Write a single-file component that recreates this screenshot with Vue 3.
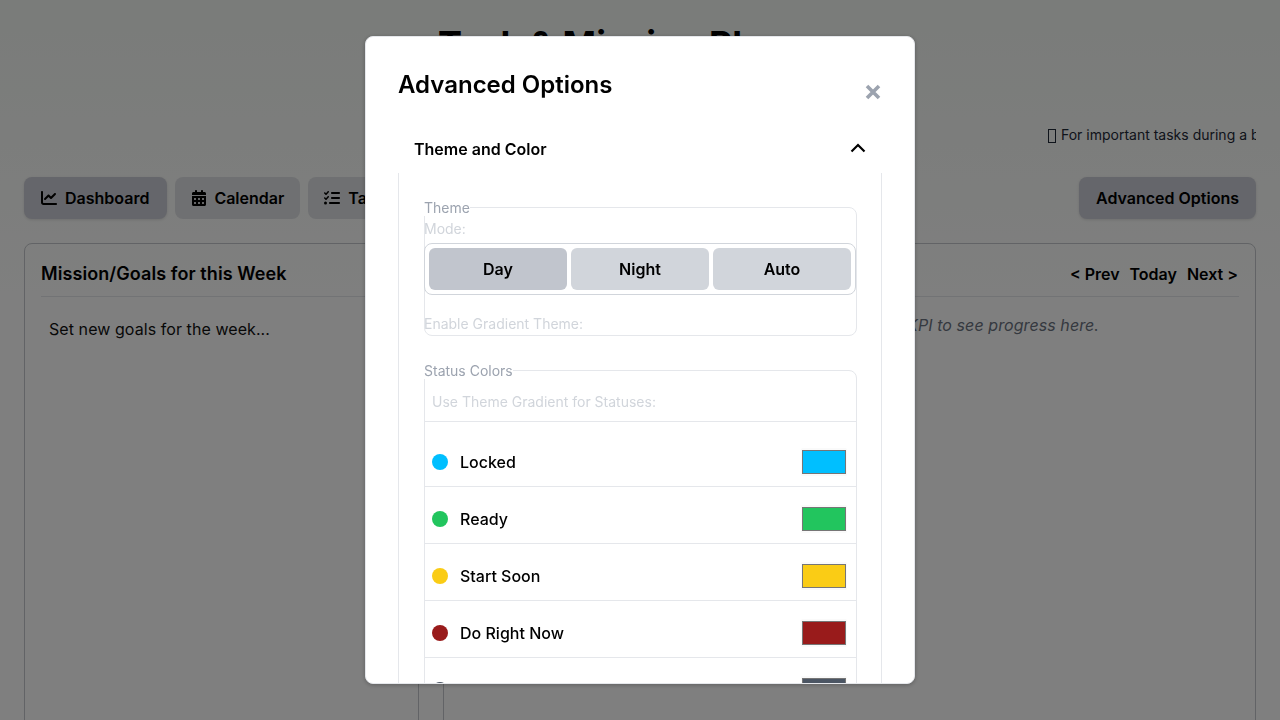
<script setup>
const tabs = [
  { label: 'Dashboard', active: true, w: 16, view: '0 0 512 512', d: 'M64 64c0-17.7-14.3-32-32-32S0 46.3 0 64V400c0 44.2 35.8 80 80 80H480c17.7 0 32-14.3 32-32s-14.3-32-32-32H80c-8.8 0-16-7.2-16-16V64zm406.6 86.6c12.5-12.5 12.5-32.8 0-45.3s-32.8-12.5-45.3 0L320 210.7l-57.4-57.4c-12.5-12.5-32.8-12.5-45.3 0l-112 112c-12.5 12.5-12.5 32.8 0 45.3s32.8 12.5 45.3 0L240 221.3l57.4 57.4c12.5 12.5 32.8 12.5 45.3 0l128-128z' },
  { label: 'Calendar', active: false, w: 14, view: '0 0 448 512', d: 'M128 0c17.7 0 32 14.3 32 32V64H288V32c0-17.7 14.3-32 32-32s32 14.3 32 32V64h48c26.5 0 48 21.5 48 48v48H0V112C0 85.5 21.5 64 48 64H96V32c0-17.7 14.3-32 32-32zM0 192H448V464c0 26.5-21.5 48-48 48H48c-26.5 0-48-21.5-48-48V192zm64 80v32c0 8.8 7.2 16 16 16h32c8.8 0 16-7.2 16-16V272c0-8.8-7.2-16-16-16H80c-8.8 0-16 7.2-16 16zm128 0v32c0 8.8 7.2 16 16 16h32c8.8 0 16-7.2 16-16V272c0-8.8-7.2-16-16-16H208c-8.8 0-16 7.2-16 16zm144-16c-8.8 0-16 7.2-16 16v32c0 8.8 7.2 16 16 16h32c8.8 0 16-7.2 16-16V272c0-8.8-7.2-16-16-16H336zM64 400v32c0 8.8 7.2 16 16 16h32c8.8 0 16-7.2 16-16V400c0-8.8-7.2-16-16-16H80c-8.8 0-16 7.2-16 16zm144-16c-8.8 0-16 7.2-16 16v32c0 8.8 7.2 16 16 16h32c8.8 0 16-7.2 16-16V400c0-8.8-7.2-16-16-16H208zm112 16v32c0 8.8 7.2 16 16 16h32c8.8 0 16-7.2 16-16V400c0-8.8-7.2-16-16-16H336c-8.8 0-16 7.2-16 16z' },
  { label: 'Tasks', active: false, w: 16, view: '0 0 512 512', d: 'M152.1 38.2c9.9 8.9 10.7 24 1.8 33.9l-72 80c-4.4 4.9-10.6 7.8-17.2 7.9s-12.9-2.4-17.6-7L7 113C-2.3 103.6-2.3 88.4 7 79s24.6-9.4 33.9 0l22.1 22.1 55.1-61.2c8.9-9.9 24-10.7 33.9-1.8zm0 160c9.9 8.9 10.7 24 1.8 33.9l-72 80c-4.4 4.9-10.6 7.8-17.2 7.9s-12.9-2.4-17.6-7L7 273c-9.4-9.4-9.4-24.6 0-33.9s24.6-9.4 33.9 0l22.1 22.1 55.1-61.2c8.9-9.9 24-10.7 33.9-1.8zM224 96c0-17.7 14.3-32 32-32H480c17.7 0 32 14.3 32 32s-14.3 32-32 32H256c-17.7 0-32-14.3-32-32zm0 160c0-17.7 14.3-32 32-32H480c17.7 0 32 14.3 32 32s-14.3 32-32 32H256c-17.7 0-32-14.3-32-32zM160 416c0-17.7 14.3-32 32-32H480c17.7 0 32 14.3 32 32s-14.3 32-32 32H192c-17.7 0-32-14.3-32-32zM48 368a48 48 0 1 1 0 96 48 48 0 1 1 0-96z' },
]
const statuses = [
  { name: 'Locked', color: '#00bfff' },
  { name: 'Ready', color: '#22c55e' },
  { name: 'Start Soon', color: '#facc15' },
  { name: 'Do Right Now', color: '#991b1b' },
  { name: 'Completed', color: '#4b5563' },
]
</script>

<template>
  <div class="page">
    <h1 class="title">Task &amp; Mission Planner</h1>
    <div class="ticker"><span class="tofu"></span>For important tasks during a busy week, plan ahead</div>
    <div class="toolbar">
      <div class="tabs">
        <button v-for="t in tabs" :key="t.label" class="btn" :class="{ on: t.active }">
          <svg class="ico" :style="{ width: t.w + 'px' }" :viewBox="t.view" fill="currentColor"><path :d="t.d" /></svg>
          {{ t.label }}
        </button>
      </div>
      <button class="btn on">Advanced Options</button>
    </div>
    <div class="cards">
      <section class="card">
        <div class="card-head"><h2>Mission/Goals for this Week</h2></div>
        <p class="goals">Set new goals for the week...</p>
      </section>
      <section class="card">
        <div class="card-head">
          <h2>KPI Progress</h2>
          <div class="nav"><span>&lt; Prev</span><span>Today</span><span>Next &gt;</span></div>
        </div>
        <p class="hint">Select a KPI to see progress here.</p>
      </section>
    </div>
  </div>

  <div class="overlay">
    <div class="modal">
      <div class="modal-head">
        <h2>Advanced Options</h2>
        <button class="close" aria-label="Close">
          <svg viewBox="0 0 18 18" width="18" height="18"><path d="M3 3l12 12M15 3L3 15" stroke="#9ca3af" stroke-width="3.6" fill="none" /></svg>
        </button>
      </div>
      <div class="acc-head">
        <span>Theme and Color</span>
        <svg class="chev" viewBox="0 0 16 16" width="16" height="16"><path d="M1.5 11.5L8 5l6.5 6.5" stroke="#000" stroke-width="2.2" fill="none" /></svg>
      </div>
      <div class="acc-body">
        <fieldset class="theme">
          <legend>Theme</legend>
          <div class="faint mode">Mode:</div>
          <div class="seg">
            <button class="seg-btn sel">Day</button>
            <button class="seg-btn">Night</button>
            <button class="seg-btn">Auto</button>
          </div>
          <div class="faint grad">Enable Gradient Theme:</div>
        </fieldset>
        <fieldset class="status">
          <legend>Status Colors</legend>
          <div class="faint use">Use Theme Gradient for Statuses:</div>
          <div class="rows">
            <div v-for="s in statuses" :key="s.name" class="row">
              <span class="dot" :style="{ background: s.color }"></span>
              <span class="name">{{ s.name }}</span>
              <input class="swatch" type="color" :value="s.color" />
            </div>
          </div>
        </fieldset>
      </div>
    </div>
  </div>
</template>

<style>
html, body { margin: 0; height: 720px; overflow: hidden; }
body { background: linear-gradient(180deg, #f4f8f4 0%, #ffffff 45%, #ffffff 100%); }
</style>

<style scoped>
* { box-sizing: border-box; }
.page { height: 720px; padding: 24px; overflow: hidden; font-family: Inter, "Liberation Sans", sans-serif; color: #111; }
.title { margin: 0; height: 40px; padding-left: 2px; font-size: 36px; line-height: 40px; font-weight: 700; text-align: center; color: #000; }
.ticker { margin-top: 62px; height: 17px; font-size: 14px; line-height: 17px; padding-left: 1024px; white-space: nowrap; overflow: hidden; color: #1f2937; }
.tofu { display: inline-block; width: 8px; height: 14px; margin-right: 5px; border: 1px solid #1f2937; vertical-align: -3px; }
.toolbar { margin-top: 34px; display: flex; justify-content: space-between; }
.tabs { display: flex; gap: 8px; }
.btn { height: 42px; padding: 0 17px; display: flex; align-items: center; gap: 8px; border: 0; border-radius: 8px; font: 600 16px Inter, sans-serif; color: #000; background: #dfe1e4; }
.tabs .btn:first-child { padding-right: 18px; }
.tabs .btn:nth-child(2) { padding-right: 16px; }
.tabs .btn:nth-child(3) { padding-left: 16px; }
.btn.on { background: #cbcdd6; box-shadow: 0 1px 3px rgba(0,0,0,.12); }
.ico { height: 16px; flex: none; }
.cards { margin-top: 24px; display: grid; grid-template-columns: 395px 813px; gap: 24px; height: 600px; }
.card { border: 1px solid #c4c7cc; border-radius: 8px; padding: 16px; }
.card-head { height: 37px; display: flex; justify-content: space-between; align-items: flex-start; border-bottom: 1px solid #e5e7eb; }
.card-head h2 { margin: 0; font-size: 18px; line-height: 28px; font-weight: 600; letter-spacing: .08px; color: #000; }
.nav { display: flex; gap: 10px; margin-right: 1px; font-size: 16px; font-weight: 600; line-height: 28px; color: #000; }
.goals { margin: 22px 0 0 8px; font-size: 16px; line-height: 20px; letter-spacing: .07px; color: #111; }
.hint { margin: 18px 0 0 0; padding-right: 140px; text-align: right; font-size: 16px; line-height: 20px; font-style: italic; letter-spacing: .08px; color: #6b7280; }

.overlay { position: fixed; inset: 0; background: rgba(0,0,0,.5); display: flex; align-items: center; justify-content: center; font-family: Inter, "Liberation Sans", sans-serif; }
.modal { width: 550px; height: 648px; background: #fff; border: 1px solid #e5e7eb; border-radius: 8px; padding: 32px 32px 0; overflow: hidden; box-shadow: 0 1px 4px rgba(0,0,0,.25); }
.modal-head { height: 31px; display: flex; justify-content: space-between; align-items: flex-end; }
.modal-head h2 { margin: 0; font-size: 24px; line-height: 32px; font-weight: 600; color: #000; align-self: flex-start; }
.close { padding: 0; margin: 0 0 -1px 0; border: 0; background: none; width: 18px; height: 18px; }
.close svg { display: block; }
.acc-head { margin-top: 25px; height: 48px; padding: 0 16px; display: flex; justify-content: space-between; align-items: center; font-size: 16px; font-weight: 600; color: #000; }
.chev { margin: -2px 0 0 0; }
.acc-body { border: 1px solid #e5e7eb; border-width: 0 1px; padding: 26px 24px 0 25px; height: 600px; }
fieldset { margin: 0; padding: 0; border: 1px solid #e5e7eb; border-radius: 8px; min-width: 0; }
legend { padding: 0; margin-left: -1px; font-size: 14px; line-height: 17px; color: #9ca3af; }
.faint { font-size: 14px; line-height: 17px; color: #d1d5db; }
.theme { height: 137px; }
.mode { margin-top: 4px; }
.seg { margin-top: 6px; height: 52px; display: flex; gap: 4px; padding: 4px; border: 1px solid #d1d5db; border-radius: 8px; width: 432px; margin-left: -1px; }
.seg-btn { flex: 1; border: 0; border-radius: 6px; background: #d1d5db; font: 600 16px Inter, sans-serif; color: #000; padding: 0; }
.seg-btn.sel { background: #c1c5cd; }
.grad { margin-top: 20px; }
.theme > .faint { margin-left: -1px; }
.status { margin-top: 26px; }
.use { padding: 14px 8px 10px 7px; border-bottom: 1px solid #e5e7eb; line-height: 17px; height: 43px; }
.row { height: 57px; padding: 8px 9px 0 7px; display: flex; align-items: center; border-bottom: 1px solid #e5e7eb; }
.row:first-child { height: 65px; padding-top: 16px; }
.dot { width: 16px; height: 16px; border-radius: 50%; flex: none; }
.name { margin-left: 12px; font-size: 16px; font-weight: 500; color: #000; }
.row .swatch { margin-left: auto; width: 46px; height: 28px; padding: 2px 1px; border: 0; background: #fafafa; border-radius: 2px; }
.swatch::-webkit-color-swatch-wrapper { padding: 0; }
.swatch::-webkit-color-swatch { border: 1px solid #767676; border-radius: 0; }
</style>
